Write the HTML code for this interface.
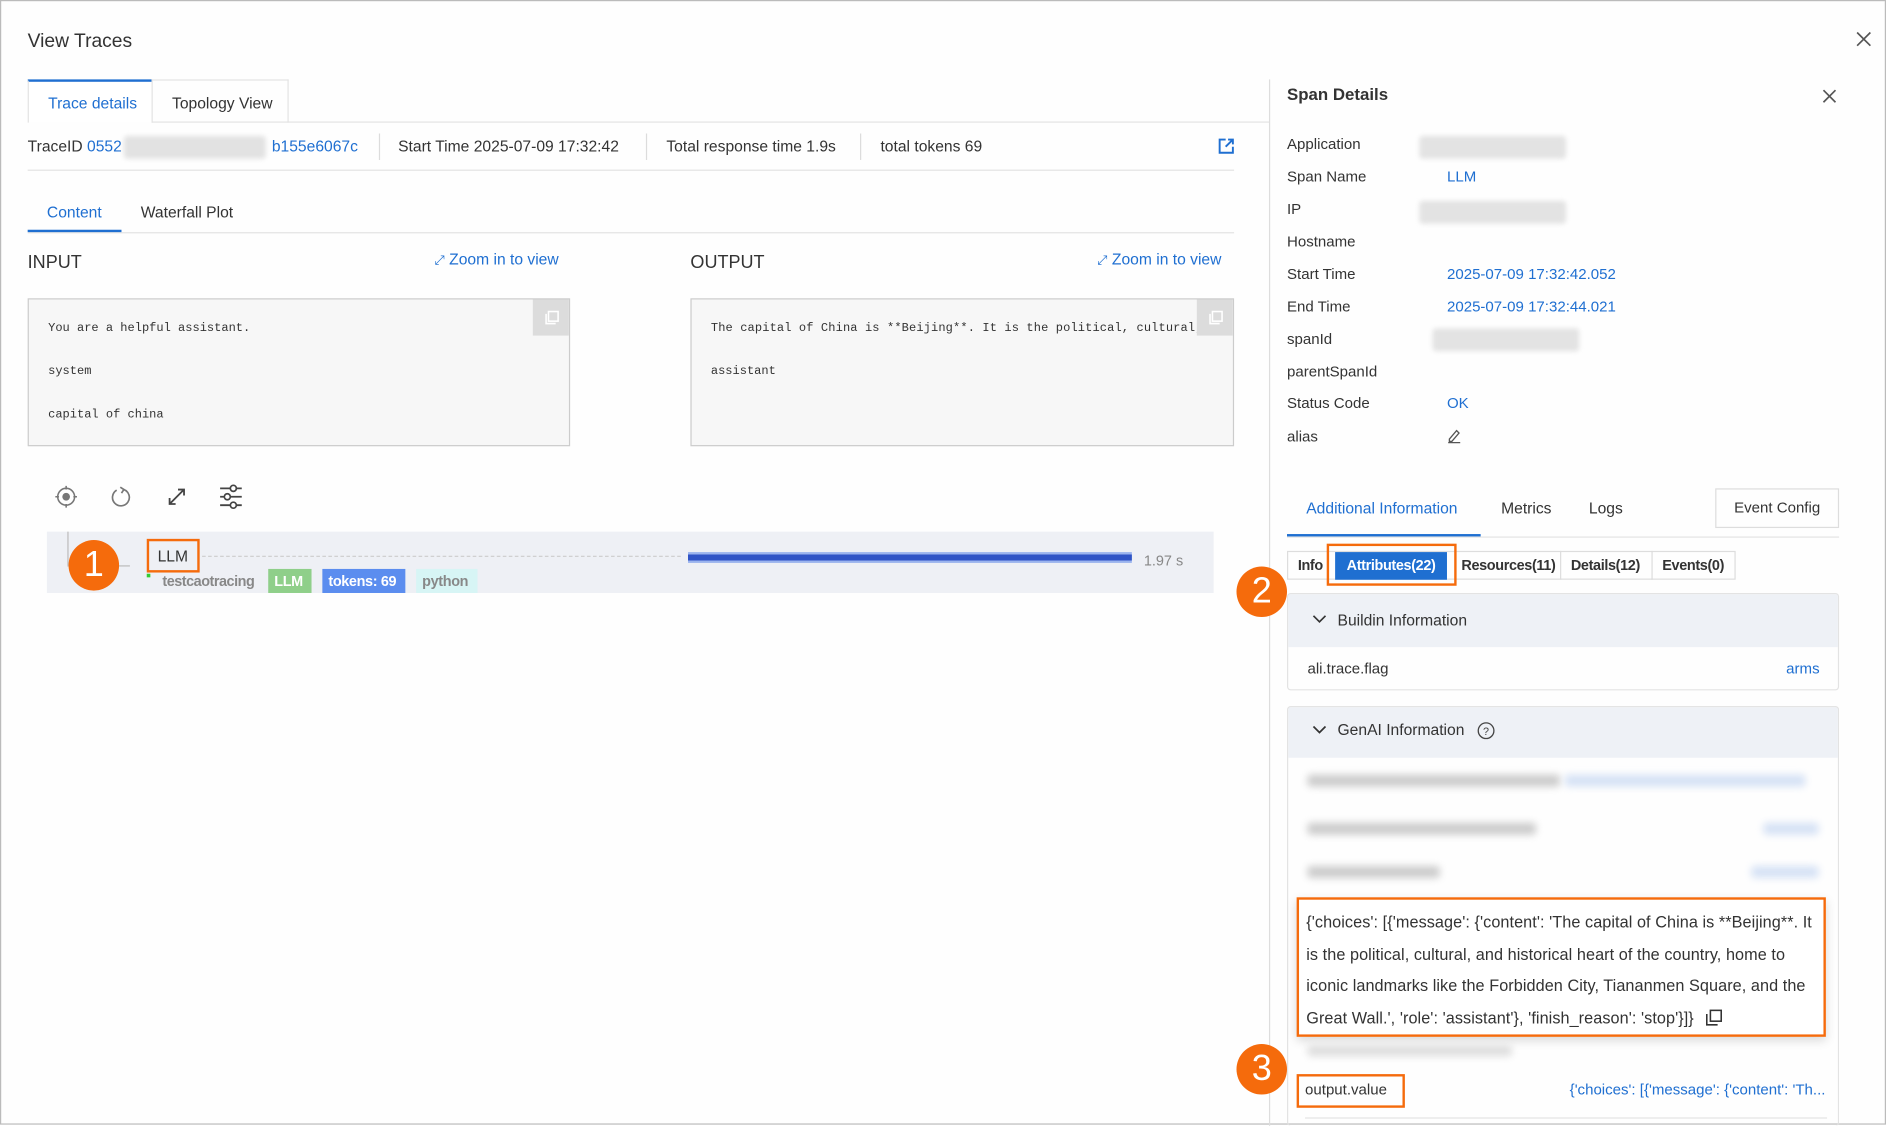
<!DOCTYPE html>
<html><head><meta charset="utf-8"><style>
html,body{margin:0;padding:0;width:1886px;height:1125px;overflow:hidden;background:#fff}
#s{position:absolute;left:0;top:0;width:1568px;height:935px;transform:scale(1.20281);transform-origin:0 0;font-family:"Liberation Sans",sans-serif;color:#333;font-size:13px;box-sizing:border-box;border:1px solid #bbb;background:#fefefe}
.a{position:absolute;white-space:nowrap}
.b{color:#1f6fd1}
.ln{position:absolute;height:1px;background:#e3e3e3}
.vl{position:absolute;width:1px;background:#dcdcdc}
.blur{position:absolute;background:#dcdcdc;filter:blur(3px);border-radius:3px}
.mono{font-family:"Liberation Mono",monospace;font-size:10px;color:#333}
.circ{position:absolute;width:42px;height:42px;border-radius:50%;background:#f56b0c;color:#fff;font-size:30px;text-align:center;line-height:42px}
.tag{position:absolute;height:20px;line-height:20px;padding:0 5px;font-size:12px;font-weight:bold;letter-spacing:-0.3px}
.lab{position:absolute;left:1069px;font-size:12.5px;color:#333}
.val{position:absolute;left:1202px;font-size:12.5px;color:#1f6fd1}
.st{position:absolute;top:462px;font-size:12px;font-weight:bold;letter-spacing:-0.3px}
</style></head><body><div id="s">
<div class="a" style="left:22px;top:25px;font-size:16px;color:#333">View Traces</div>
<svg class="a" style="left:1542px;top:25px" width="13" height="13"><path d="M1 1L12 12M12 1L1 12" stroke="#555" stroke-width="1.4"/></svg>

<div class="a" style="left:22px;top:65px;width:103px;height:36px;border-top:2px solid #1f6fd1;border-left:1px solid #e3e3e3;background:#fff;box-sizing:border-box"></div>
<div class="a b" style="left:39px;top:77px">Trace details</div>
<div class="a" style="left:125px;top:65px;width:114px;height:36px;border:1px solid #e3e3e3;border-bottom:none;box-sizing:border-box"></div>
<div class="a" style="left:142px;top:77px">Topology View</div>
<div class="ln" style="left:125px;top:100px;width:929px"></div>

<div class="a" style="left:22px;top:113px">TraceID <span class="b">0552</span></div>
<div class="blur" style="left:102px;top:112px;width:118px;height:19px;filter:blur(2px);background:#e2e2e2"></div>
<div class="a b" style="left:225px;top:113px">b155e6067c</div>
<div class="vl" style="left:314px;top:110px;height:22px"></div>
<div class="a" style="left:330px;top:113px">Start Time 2025-07-09 17:32:42</div>
<div class="vl" style="left:536px;top:110px;height:22px"></div>
<div class="a" style="left:553px;top:113px">Total response time 1.9s</div>
<div class="vl" style="left:714px;top:110px;height:22px"></div>
<div class="a" style="left:731px;top:113px">total tokens 69</div>
<svg class="a" style="left:1012px;top:114px" width="13" height="13"><path d="M6 1H1V12H12V7M8 1H12V5M12 1L6 7" stroke="#1f6fd1" stroke-width="1.6" fill="none"/></svg>
<div class="ln" style="left:22px;top:140px;width:1003px"></div>

<div class="a b" style="left:38px;top:168px">Content</div>
<div class="a" style="left:116px;top:168px">Waterfall Plot</div>
<div class="ln" style="left:22px;top:192px;width:1003px"></div>
<div class="a" style="left:22px;top:190px;width:78px;height:2px;background:#1f6fd1"></div>

<div class="a" style="left:22px;top:209px;font-size:15px">INPUT</div>
<div class="a b" style="left:360px;top:207px"><span style="font-size:11px">⤢</span> Zoom in to view</div>
<div class="a" style="left:573px;top:209px;font-size:15px">OUTPUT</div>
<div class="a b" style="left:911px;top:207px"><span style="font-size:11px">⤢</span> Zoom in to view</div>

<div class="a" style="left:22px;top:247px;width:451px;height:123px;border:1px solid #ccc;background:#f7f7f7;box-sizing:border-box;overflow:hidden">
<div class="a" style="right:0;top:0;width:30px;height:30px;background:#dcdcdc"></div>
<svg class="a" style="left:429px;top:9px" width="12" height="12"><rect x="3" y="1" width="8" height="8" stroke="#fff" fill="none" stroke-width="1.3"/><path d="M1 3V11H9" stroke="#fff" fill="none" stroke-width="1.3"/></svg>
<div class="a mono" style="left:16px;top:19px">You are a helpful assistant.</div>
<div class="a mono" style="left:16px;top:55px">system</div>
<div class="a mono" style="left:16px;top:91px">capital of china</div>
</div>
<div class="a" style="left:573px;top:247px;width:452px;height:123px;border:1px solid #ccc;background:#f7f7f7;box-sizing:border-box;overflow:hidden">
<div class="a mono" style="left:16px;top:19px;letter-spacing:0.1px">The capital of China is **Beijing**. It is the political, cultural, and</div>
<div class="a mono" style="left:16px;top:55px">assistant</div>
<div class="a" style="right:0;top:0;width:30px;height:30px;background:#dcdcdc"></div>
<svg class="a" style="left:430px;top:9px" width="12" height="12"><rect x="3" y="1" width="8" height="8" stroke="#fff" fill="none" stroke-width="1.3"/><path d="M1 3V11H9" stroke="#fff" fill="none" stroke-width="1.3"/></svg>
</div>

<svg class="a" style="left:44px;top:402px" width="20" height="20"><circle cx="10" cy="10" r="7" stroke="#777" fill="none" stroke-width="1.3"/><circle cx="10" cy="10" r="3.2" fill="#777"/><path d="M10 1V4M10 16V19M1 10H4M16 10H19" stroke="#777" stroke-width="1.3"/></svg>
<svg class="a" style="left:90px;top:402px" width="20" height="20"><path d="M12 4A7 7 0 1 1 6 4.5" stroke="#777" fill="none" stroke-width="1.4"/><path d="M9 2L12 4L10 7" stroke="#777" fill="none" stroke-width="1.4"/></svg>
<svg class="a" style="left:136px;top:402px" width="20" height="20"><path d="M4 16L16 4M11 4H16V9M4 11V16H9" stroke="#444" fill="none" stroke-width="1.5"/></svg>
<svg class="a" style="left:181px;top:401px" width="20" height="22"><path d="M1 4H19M1 11H19M1 18H19" stroke="#444" stroke-width="1.5"/><circle cx="12" cy="4" r="2.5" fill="#fff" stroke="#444" stroke-width="1.4"/><circle cx="7" cy="11" r="2.5" fill="#fff" stroke="#444" stroke-width="1.4"/><circle cx="12" cy="18" r="2.5" fill="#fff" stroke="#444" stroke-width="1.4"/></svg>

<div class="a" style="left:38px;top:441px;width:970px;height:51px;background:#eef0f5"></div>
<div class="a" style="left:55px;top:441px;width:1px;height:28px;background:#bbb"></div>
<div class="a" style="left:55px;top:469px;width:52px;height:1px;background:#bbb"></div>
<div class="circ" style="left:56px;top:448px">1</div>
<div class="a" style="left:121px;top:447px;width:44px;height:28px;border:2px solid #f56b0c;box-sizing:border-box"></div>
<div class="a" style="left:130px;top:454px;font-size:13px;color:#333">LLM</div>
<div class="a" style="left:167px;top:461px;width:398px;border-top:1px dashed #ccc"></div>
<div class="a" style="left:571px;top:458px;width:369px;height:9px;background:#9bb4ee"></div>
<div class="a" style="left:571px;top:460px;width:369px;height:5px;background:#2f54c6"></div>
<div class="a" style="left:950px;top:458px;font-size:12px;color:#888">1.97 s</div>
<div class="a" style="left:121px;top:476px;width:3px;height:3px;background:#3c3"></div>
<div class="a" style="left:134px;top:475px;color:#888;font-size:12px;font-weight:bold;letter-spacing:-0.4px">testcaotracing</div>
<div class="tag" style="left:222px;top:472px;width:26px;background:#8fcf8a;color:#fff">LLM</div>
<div class="tag" style="left:267px;top:472px;width:59px;background:#5b8def;color:#fff">tokens: 69</div>
<div class="tag" style="left:345px;top:472px;width:41px;background:#d7f5f5;color:#888">python</div>

<div class="vl" style="left:1054px;top:65px;height:870px;background:#ddd"></div>

<div class="a" style="left:1069px;top:69px;font-size:14px;font-weight:bold;color:#333">Span Details</div>
<svg class="a" style="left:1514px;top:73px" width="12" height="12"><path d="M1 1L11 11M11 1L1 11" stroke="#555" stroke-width="1.4"/></svg>
<div class="lab" style="top:112px">Application</div><div class="blur" style="left:1179px;top:112px;width:122px;height:19px;background:#e3e3e3;filter:blur(2px)"></div>
<div class="lab" style="top:139px">Span Name</div><div class="val" style="top:139px">LLM</div>
<div class="lab" style="top:166px">IP</div><div class="blur" style="left:1179px;top:166px;width:122px;height:19px;background:#e3e3e3;filter:blur(2px)"></div>
<div class="lab" style="top:193px">Hostname</div>
<div class="lab" style="top:220px">Start Time</div><div class="val" style="top:220px">2025-07-09 17:32:42.052</div>
<div class="lab" style="top:247px">End Time</div><div class="val" style="top:247px">2025-07-09 17:32:44.021</div>
<div class="lab" style="top:274px">spanId</div><div class="blur" style="left:1190px;top:272px;width:122px;height:19px;background:#e3e3e3;filter:blur(2px)"></div>
<div class="lab" style="top:301px">parentSpanId</div>
<div class="lab" style="top:327px">Status Code</div><div class="val" style="top:327px">OK</div>
<div class="lab" style="top:355px">alias</div>
<svg class="a" style="left:1202px;top:355px" width="12" height="13"><path d="M2 9L8 2L10 4L4 11H2Z" stroke="#555" fill="none" stroke-width="1.1"/><path d="M1 12H11" stroke="#555"/></svg>

<div class="a b" style="left:1085px;top:414px;font-size:13px">Additional Information</div>
<div class="a" style="left:1247px;top:414px">Metrics</div>
<div class="a" style="left:1320px;top:414px">Logs</div>
<div class="a" style="left:1425px;top:405px;width:103px;height:33px;border:1px solid #ddd;box-sizing:border-box;text-align:center;line-height:31px;font-size:12.5px">Event Config</div>
<div class="ln" style="left:1069px;top:445px;width:459px"></div>
<div class="a" style="left:1069px;top:443px;width:161px;height:2px;background:#1f6fd1"></div>

<div class="a" style="left:1069px;top:457px;width:373px;height:24px;border:1px solid #ddd;box-sizing:border-box"></div>
<div class="st" style="left:1078px">Info</div>
<div class="a" style="left:1109px;top:458px;width:93px;height:23px;background:#1f6fd1;color:#fff;font-size:12px;font-weight:bold;letter-spacing:-0.3px;text-align:center;line-height:23px">Attributes(22)</div>
<div class="a" style="left:1102px;top:451px;width:108px;height:35px;border:2px solid #f56b0c;box-sizing:border-box"></div>
<div class="st" style="left:1214px">Resources(11)</div>
<div class="vl" style="left:1296px;top:457px;height:24px"></div>
<div class="st" style="left:1305px">Details(12)</div>
<div class="vl" style="left:1372px;top:457px;height:24px"></div>
<div class="st" style="left:1381px">Events(0)</div>
<div class="circ" style="left:1027px;top:470px">2</div>

<div class="a" style="left:1069px;top:492px;width:459px;height:81px;border:1px solid #e3e3e3;box-sizing:border-box;border-radius:3px;overflow:hidden">
<div class="a" style="left:0;top:0;width:459px;height:44px;background:#eef1f6"></div></div>
<svg class="a" style="left:1090px;top:510px" width="12" height="8"><path d="M1 1L6 6L11 1" stroke="#333" fill="none" stroke-width="1.4"/></svg>
<div class="a" style="left:1111px;top:507px">Buildin Information</div>
<div class="a" style="left:1086px;top:548px;font-size:12.5px">ali.trace.flag</div>
<div class="a b" style="left:1484px;top:548px;font-size:12.5px">arms</div>

<div class="a" style="left:1069px;top:586px;width:459px;height:349px;border:1px solid #e3e3e3;border-bottom:none;box-sizing:border-box;border-radius:3px;overflow:hidden">
<div class="a" style="left:0;top:0;width:459px;height:42px;background:#eef1f6"></div></div>
<svg class="a" style="left:1090px;top:602px" width="12" height="8"><path d="M1 1L6 6L11 1" stroke="#333" fill="none" stroke-width="1.4"/></svg>
<div class="a" style="left:1111px;top:598px">GenAI Information</div>
<svg class="a" style="left:1227px;top:599px" width="15" height="15"><circle cx="7.5" cy="7.5" r="6.5" stroke="#444" fill="none" stroke-width="1.1"/><text x="7.5" y="11" font-size="9" text-anchor="middle" fill="#444" font-family="Liberation Sans">?</text></svg>

<div class="blur" style="left:1086px;top:643px;width:210px;height:10px;background:#ccc"></div>
<div class="blur" style="left:1300px;top:643px;width:200px;height:10px;background:#d6e2f5"></div>
<div class="blur" style="left:1086px;top:683px;width:190px;height:10px;background:#ccc"></div>
<div class="blur" style="left:1465px;top:683px;width:46px;height:10px;background:#d6e2f5"></div>
<div class="blur" style="left:1086px;top:719px;width:110px;height:10px;background:#ccc"></div>
<div class="blur" style="left:1455px;top:719px;width:56px;height:10px;background:#d6e2f5"></div>

<div class="a" style="left:1077px;top:745px;width:440px;height:116px;border:2px solid #f56b0c;box-sizing:border-box;background:#fff;box-shadow:0 3px 8px rgba(0,0,0,.15)"></div>
<div class="a" style="left:1085px;top:753px;font-size:13.5px;line-height:26.5px;color:#333;letter-spacing:0.05px">{'choices': [{'message': {'content': 'The capital of China is **Beijing**. It<br>is the political, cultural, and historical heart of the country, home to<br>iconic landmarks like the Forbidden City, Tiananmen Square, and the<br>Great Wall.', 'role': 'assistant'}, 'finish_reason': 'stop'}]} <svg width="14" height="14" style="vertical-align:-2px;margin-left:6px"><rect x="4" y="1" width="9" height="9" stroke="#333" fill="none" stroke-width="1.3"/><path d="M1 4V13H10" stroke="#333" fill="none" stroke-width="1.3"/></svg></div>

<div class="blur" style="left:1086px;top:868px;width:170px;height:9px;background:#ddd"></div>
<div class="circ" style="left:1027px;top:867px">3</div>
<div class="a" style="left:1077px;top:892px;width:90px;height:28px;border:2px solid #f56b0c;box-sizing:border-box"></div>
<div class="a" style="left:1084px;top:898px;font-size:12.5px">output.value</div>
<div class="a b" style="left:1304px;top:898px;font-size:12.5px">{'choices': [{'message': {'content': 'Th...</div>
<div class="ln" style="left:1084px;top:928px;width:434px"></div>
</div></body></html>
